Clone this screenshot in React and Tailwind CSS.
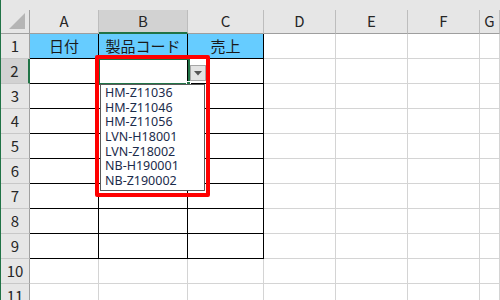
import React from "react";

const COLS = [
  { key: "A", w: "w-[69px]" },
  { key: "B", w: "w-[89px]" },
  { key: "C", w: "w-[76px]" },
  { key: "D", w: "w-[72px]" },
  { key: "E", w: "w-[72px]" },
  { key: "F", w: "w-[72px]" },
  { key: "G", w: "flex-1" },
];

const ITEMS = [
  "HM-Z11036",
  "HM-Z11046",
  "HM-Z11056",
  "LVN-H18001",
  "LVN-Z18002",
  "NB-H190001",
  "NB-Z190002",
];

const HEAD = ["日付", "製品コード", "売上"];

const font = { fontFamily: '"Noto Sans CJK JP", "Noto Sans", sans-serif' };

function Cell({ col, row }) {
  const inTable = row <= 9 && col < 3;
  const border = inTable ? "border-black" : "border-[#d4d4d4]";
  const fill = row === 1 && col < 3 ? "bg-[#66ccff]" : "bg-white";
  return (
    <div
      className={`${COLS[col].w} h-full shrink-0 border-r border-b ${border} ${fill} flex items-center justify-center text-[15px] text-[#1a1a1a]`}
    >
      {row === 1 && col < 3 ? HEAD[col] : null}
    </div>
  );
}

export default function App() {
  const rows = Array.from({ length: 11 }, (_, i) => i + 1);

  return (
    <div
      className="relative w-[500px] h-[300px] overflow-hidden bg-white border-l border-[#217346] flex flex-col"
      style={font}
    >
      {/* top strip */}
      <div className="h-[10px] shrink-0 bg-[#e6e6e6]" />

      {/* column headers */}
      <div className="flex h-[24px] shrink-0 bg-[#e6e6e6]">
        <div className="relative w-[29px] h-full shrink-0 border-r border-b border-[#a0a0a0]">
          <svg className="absolute left-[7px] top-[2px]" width="18" height="18" viewBox="0 0 18 18">
            <polygon points="1,17 17,1 17,17" fill="#b5b5b5" />
          </svg>
        </div>
        {COLS.map((c) => (
          <div
            key={c.key}
            className={`${c.w} h-full shrink-0 flex items-center justify-center text-[15px] text-[#262626] border-r border-[#bdbdbd] ${
              c.key === "B" ? "bg-[#d2d2d2] border-b-2 border-b-[#217346]" : "border-b border-b-[#9e9e9e]"
            }`}
          >
            {c.key}
          </div>
        ))}
      </div>

      {/* rows */}
      {rows.map((r) => (
        <div key={r} className="flex h-[25px] shrink-0">
          <div
            className={`w-[29px] h-full shrink-0 flex items-center justify-center text-[15px] text-[#262626] border-b border-b-[#c8c8c8] ${
              r === 2
                ? "bg-[#d2d2d2] border-r-2 border-r-[#217346]"
                : "bg-[#e6e6e6] border-r border-r-[#a0a0a0]"
            }`}
          >
            {r}
          </div>
          {COLS.map((c, i) => (
            <Cell key={c.key} col={i} row={r} />
          ))}
        </div>
      ))}

      {/* selected cell B2 */}
      <div className="absolute left-[97px] top-[58px] w-[92px] h-[27px] border-2 border-[#217346]" />
      <div className="absolute left-[185px] top-[81px] w-[5px] h-[5px] bg-[#217346] border border-white" />

      {/* dropdown button */}
      <div className="absolute left-[189px] top-[65px] w-[16px] h-[16px] bg-[#e3e3e3] border border-[#a6a6a6] flex items-center justify-center">
        <svg width="8" height="5" viewBox="0 0 8 5">
          <polygon points="0,0 8,0 4,4.5" fill="#555555" />
        </svg>
      </div>

      {/* dropdown list */}
      <div
        className="absolute left-[99px] top-[84px] w-[105px] h-[107px] bg-white border border-[#5a5a5a] pt-[1px] pl-[4px]"
        style={{ fontFamily: '"Noto Sans", sans-serif' }}
      >
        {ITEMS.map((t) => (
          <div key={t} className="h-[14.7px] leading-[14.7px] text-[12.5px] text-[#1b2b4b]">
            {t}
          </div>
        ))}
      </div>

      {/* red highlight */}
      <div className="absolute left-[94px] top-[55px] w-[115px] h-[142px] border-4 border-[#ff0000] rounded-[2px]" />
    </div>
  );
}
